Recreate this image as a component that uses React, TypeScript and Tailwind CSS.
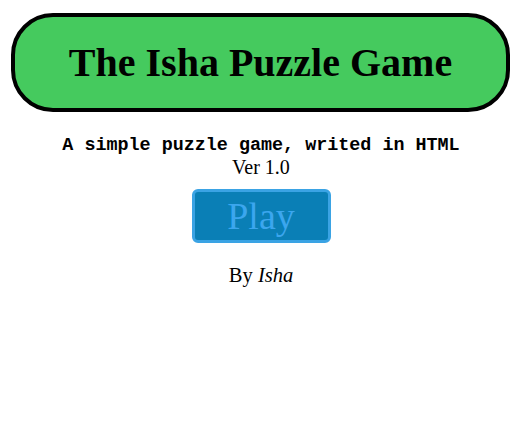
export default function App() {
  return (
    <div className="flex flex-col items-center bg-white min-h-[447px] w-[522px] text-black">
      <div className="mt-[13px] w-[499px] h-[99px] ml-[-1px] border-4 border-black rounded-[42px] bg-[#45ca5e] flex items-center justify-center">
        <h1 className="font-['Liberation_Serif',serif] font-bold text-[40px] leading-none">
          The Isha Puzzle Game
        </h1>
      </div>
      <p className="mt-[24px] font-['Liberation_Mono',monospace] font-bold text-[18.4px] leading-[20px]">
        A simple puzzle game, writed in HTML
      </p>
      <p className="mt-0 font-['Liberation_Serif',serif] text-[20px] leading-[22px]">Ver 1.0</p>
      <button className="mt-[11px] w-[139px] h-[54px] rounded-[6px] border-[3px] border-[#3aa3e4] bg-[#0a7fb6] text-[#3ba6ee] font-['Liberation_Serif',serif] text-[38px] leading-none flex items-center justify-center">
        Play
      </button>
      <p className="mt-[21px] font-['Liberation_Serif',serif] text-[20.5px] leading-[22px]">
        By <i>Isha</i>
      </p>
    </div>
  );
}
